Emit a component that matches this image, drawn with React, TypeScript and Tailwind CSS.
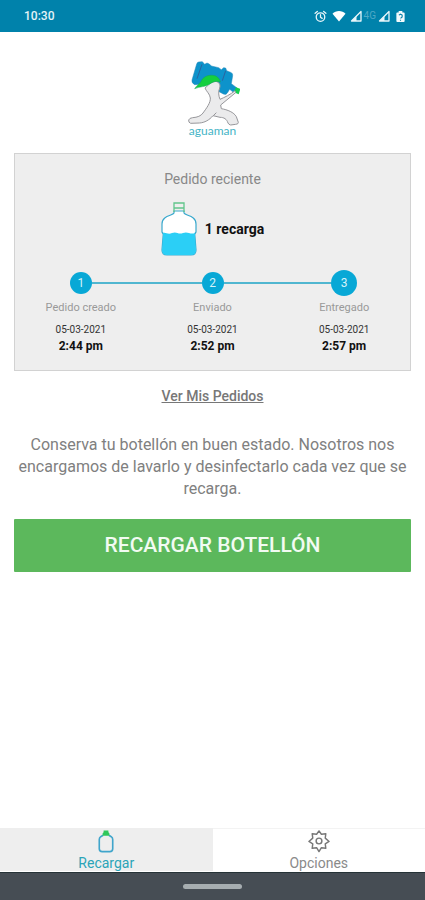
import type { ReactNode } from 'react'

interface Step {
  label: string
  date: string
  time: string
}

const STEPS: Step[] = [
  { label: 'Pedido creado', date: '05-03-2021', time: '2:44 pm' },
  { label: 'Enviado', date: '05-03-2021', time: '2:52 pm' },
  { label: 'Entregado', date: '05-03-2021', time: '2:57 pm' },
]

function SignalIcon() {
  return (
    <svg viewBox="0 0 12 12" className="size-3" fill="none" aria-hidden="true">
      <path d="M11 1.5V11H1.5z" stroke="#e9f6fa" strokeWidth="1.3" strokeLinejoin="round" />
      <path d="M6.5 6v5h-5z" fill="#e9f6fa" />
    </svg>
  )
}

function StatusBar() {
  return (
    <header className="flex h-8 shrink-0 items-center justify-between bg-[#0082ab] pr-[19px] pl-6 text-xs font-medium text-[#e4f3f7]">
      <span>10:30</span>
      <div className="flex items-center gap-1">
        <svg viewBox="0 0 14 14" className="mr-px size-[13px]" fill="none" stroke="#e9f6fa" strokeWidth="1.4" strokeLinecap="round" aria-hidden="true">
          <circle cx="7" cy="7.6" r="4.6" />
          <path d="M7 5v2.8l1.8 1.2M1.2 3.6l2.4-2M12.8 3.6l-2.4-2" />
        </svg>
        <svg viewBox="0 0 14 12" className="h-3 w-3.5" aria-hidden="true">
          <path d="M7 11.5.5 3.8C2.2 2 4.5 1 7 1s4.8 1 6.5 2.8z" fill="#fff" />
        </svg>
        <SignalIcon />
        <span className="-mx-0.5 text-[10px] leading-3 font-normal text-[#4fa9c6]">4G</span>
        <SignalIcon />
        <svg viewBox="0 0 12 14" className="ml-px h-[13px] w-[11px]" aria-hidden="true">
          <path d="M4 1h4v1.5h1.5q1 0 1 1V12q0 1-1 1h-7q-1 0-1-1V3.5q0-1 1-1H4z" fill="#f3fafc" />
          <path d="M4.2 5.5 6 4.5l1.8 1v2L6 9M6 10.5v1" stroke="#0082ab" strokeWidth="1.2" fill="none" />
        </svg>
      </div>
    </header>
  )
}

/** Walking man carrying a water bottle on his shoulders */
function Logo() {
  return (
    <div className="flex flex-col items-center">
      <svg viewBox="0 0 162 207" className="h-[69px] w-[54px]" fill="none" aria-hidden="true">
        {/* bottle */}
        <path
          d="M38 12 49 11 56 19 63 15 70 18 76 24 98 29 106 35 113 29 119 30 122 38 136 44Q141 47 140 53L136 77 153 90 145 105 131 94 124 105Q121 112 112 108L94 98 80 76 26 80Q16 75 18 66L32 18Q34 12 38 12Z"
          fill="#0d93cb"
          stroke="#2387b8"
          strokeWidth="1.5"
          strokeLinejoin="round"
        />
        <path d="M48 19 33 62M119 38l-10 30" stroke="#2b63a0" strokeWidth="3" />
        <path d="m150 88 13 5-5 16-14-6z" fill="#14d04f" />
        {/* body */}
        <path
          d="M62 86C68 78 82 68 93 71C101 74 104 82 101 90C96 102 98 114 102 124C116 118 134 109 146 99L150 103L104 141L106 152C124 155 144 163 151 176L157 193Q157 199 149 199L134 201Q128 200 126 195C122 183 114 178 102 178L81 173C70 186 56 194 40 195L14 196Q7 194 8 186Q10 180 20 179C34 178 45 174 51 165C62 150 74 134 73 120C72 108 60 99 57 90Z"
          fill="#ebebec"
          stroke="#97979b"
          strokeWidth="3"
          strokeLinejoin="round"
        />
        <path d="M82 173 91 164" stroke="#97979b" strokeWidth="3" />
        {/* cap */}
        <path d="M26 92C32 83 39 78 44 72C50 57 65 50 80 52C92 53 101 60 103 72C91 68 80 71 70 79C58 87 42 85 26 92Z" fill="#14cf3f" stroke="#17a05c" strokeWidth="1.5" />
      </svg>
      <span className="-mt-0.5 font-[Lato,sans-serif] text-xs leading-3 text-[#45b4c6]">aguaman</span>
    </div>
  )
}

function BottleIcon() {
  return (
    <svg viewBox="0 0 36 54" className="h-[54px] w-9" fill="none" aria-hidden="true">
      <path
        d="M13 9v2C12 14 1 13 1 22v8q2 2 1 5L1 48q0 5 5 5h24q5 0 5-5l-1-13q-1-3 1-5v-8c0-9-11-8-12-11V9z"
        fill="#fff"
        stroke="#3aa9ce"
        strokeWidth="1.2"
      />
      <path d="M2 31c3-1 5 2 9 0 5-2 6 2 11 0 5-2 7 2 12 0v4l1 13q0 5-5 5H6q-5 0-5-5l1-13z" fill="#2bcff6" />
      <path d="M13 1h10v5H13zM13 6v4M23 6v4" stroke="#61c58b" strokeWidth="1.3" />
    </svg>
  )
}

function Timeline() {
  return (
    <ol className="grid grid-cols-3">
      {STEPS.map((step, i) => (
        <li key={step.label} className="flex flex-col items-center">
          <div className="flex h-[26px] w-full items-center">
            <span className={`h-0.5 flex-1 ${i > 0 ? 'bg-[#50b6d0]' : ''}`} />
            <span
              className={`flex items-center justify-center rounded-full bg-[#08a8d6] text-xs text-[#d5f3fa] ${
                i === STEPS.length - 1 ? 'size-[26px]' : 'size-[22px]'
              }`}
            >
              {i + 1}
            </span>
            <span className={`h-0.5 flex-1 ${i < STEPS.length - 1 ? 'bg-[#50b6d0]' : ''}`} />
          </div>
          <p className="mt-1 text-[11px] leading-4 text-[#999]">{step.label}</p>
          <p className="mt-1.5 text-[10px] leading-4 text-[#333]">{step.date}</p>
          <p className="text-xs leading-4 font-bold text-[#111]">{step.time}</p>
        </li>
      ))}
    </ol>
  )
}

function NavItem({ icon, label, active }: { icon: ReactNode; label: string; active?: boolean }) {
  return (
    <button
      type="button"
      aria-current={active ? 'page' : undefined}
      className={`flex h-full flex-1 flex-col items-center border-t text-sm leading-4 ${
        active ? 'border-[#eee] bg-[#eee] text-[#2ba4b8]' : 'border-[#f3f3f3] bg-white text-[#8a8a8a]'
      }`}
    >
      {icon}
      <span className="mt-0.5">{label}</span>
    </button>
  )
}

export default function App() {
  return (
    <div className="flex min-h-screen flex-col bg-white font-[Roboto,sans-serif]">
      <StatusBar />

      <main className="flex flex-1 flex-col px-3.5 pt-[26px]">
        <Logo />

        <section className="mt-4 border border-[#d2d2d2] bg-[#eee] py-4">
          <h1 className="text-center text-sm leading-[18px] text-[#888]">Pedido reciente</h1>
          <div className="my-3.5 flex items-center justify-center gap-2">
            <BottleIcon />
            <p className="text-sm font-bold text-[#111]">1 recarga</p>
          </div>
          <Timeline />
        </section>

        <a href="#pedidos" className="mt-4 self-center text-sm leading-[18px] font-medium text-[#777] underline">
          Ver Mis Pedidos
        </a>

        <p className="mt-[29px] text-center text-base leading-[22px] text-[#808080]">
          Conserva tu botellón en buen estado. Nosotros nos encargamos de lavarlo y desinfectarlo cada vez que se recarga.
        </p>

        <button type="button" className="mt-[19px] h-[53px] rounded-[1px] bg-[#5cb85c] text-[21px] font-medium text-[#f2fbf2]">
          RECARGAR BOTELLÓN
        </button>
      </main>

      <nav className="flex h-11 shrink-0 border-b border-white">
        <NavItem
          active
          label="Recargar"
          icon={
            <svg viewBox="0 0 18 25" className="h-[25px] w-[18px]" fill="none" aria-hidden="true">
              <path d="M6 6.5 3.5 8Q2 9 2 11v9.5q0 3 3 3h8q3 0 3-3V11q0-2-1.500-3L12 6.5" stroke="#40a5cb" strokeWidth="1.7" />
              <path d="M6.5 1.500h5v2l1 1V7h-7V4.500l1-1z" fill="#2fc75b" />
            </svg>
          }
        />
        <NavItem
          label="Opciones"
          icon={
            <svg viewBox="0 0 24 25" className="h-[25px] w-6" fill="none" stroke="#777" strokeWidth="1.5" strokeLinejoin="round" aria-hidden="true">
              <path d="m12 2 2.500 3.500 4.600-.600-.600 4.600L22.500 13l-4 2.500.600 4.600-4.600-.600L12 23.500l-2.500-4-4.600.600.600-4.600-4-2.500 4-3.500-.600-4.600 4.600.600z" />
              <circle cx="12" cy="12.5" r="3" />
            </svg>
          }
        />
      </nav>

      <footer className="flex h-7 shrink-0 items-center justify-center border-t border-[#263337] bg-[#464d54]">
        <span className="h-[5px] w-[59px] rounded-full bg-[#a6adb0]" />
      </footer>
    </div>
  )
}
